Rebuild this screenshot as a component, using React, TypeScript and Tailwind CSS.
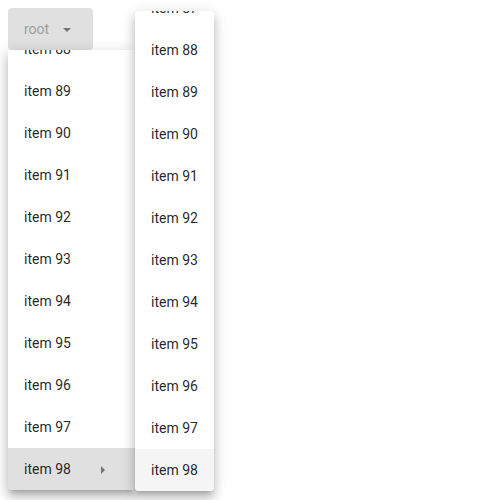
const FIRST = [88, 89, 90, 91, 92, 93, 94, 95, 96, 97, 98];
const SECOND = [87, 88, 89, 90, 91, 92, 93, 94, 95, 96, 97, 98];

export default function App() {
  return (
    <div className="relative h-[500px] w-[500px] bg-white font-['Roboto',sans-serif] text-[14px]">
      {/* Trigger */}
      <div className="absolute left-2 top-2 flex h-[42px] w-[85px] items-center rounded bg-[#e0e0e0] pl-4 pt-px text-[#9e9e9e]">
        <span>root</span>
        <svg className="ml-[14px]" width="8" height="4" viewBox="0 0 8 4">
          <path d="M0 0h8L4 4z" fill="#757575" />
        </svg>
      </div>

      {/* First menu */}
      <div className="absolute left-2 top-[50px] h-[440px] w-[127px] overflow-hidden rounded-b bg-white shadow-[0_5px_5px_-3px_rgba(0,0,0,0.2),0_8px_10px_1px_rgba(0,0,0,0.14),0_3px_14px_2px_rgba(0,0,0,0.12)]">
        <div className="-mt-[22px]">
          {FIRST.map((n) => (
            <div
              key={n}
              className={
                "flex h-[42px] items-center pl-4 pt-px text-[rgba(0,0,0,0.87)] " +
                (n === 98 ? "bg-[#e0e0e0]" : "")
              }
            >
              <span>item {n}</span>
              {n === 98 && (
                <svg className="ml-[30px]" width="4" height="8" viewBox="0 0 4 8">
                  <path d="M0 0v8l4-4z" fill="#757575" />
                </svg>
              )}
            </div>
          ))}
        </div>
      </div>

      {/* Second menu */}
      <div className="absolute left-[135px] top-[11px] h-[480px] w-[79px] overflow-hidden rounded bg-white shadow-[0_5px_5px_-3px_rgba(0,0,0,0.2),0_8px_10px_1px_rgba(0,0,0,0.14),0_3px_14px_2px_rgba(0,0,0,0.12)]">
        <div className="-mt-[24px]">
          {SECOND.map((n) => (
            <div
              key={n}
              className={
                "flex h-[42px] items-center pl-4 pt-px text-[rgba(0,0,0,0.87)] " +
                (n === 98 ? "bg-[#f5f5f5]" : "")
              }
            >
              item {n}
            </div>
          ))}
        </div>
      </div>
    </div>
  );
}
